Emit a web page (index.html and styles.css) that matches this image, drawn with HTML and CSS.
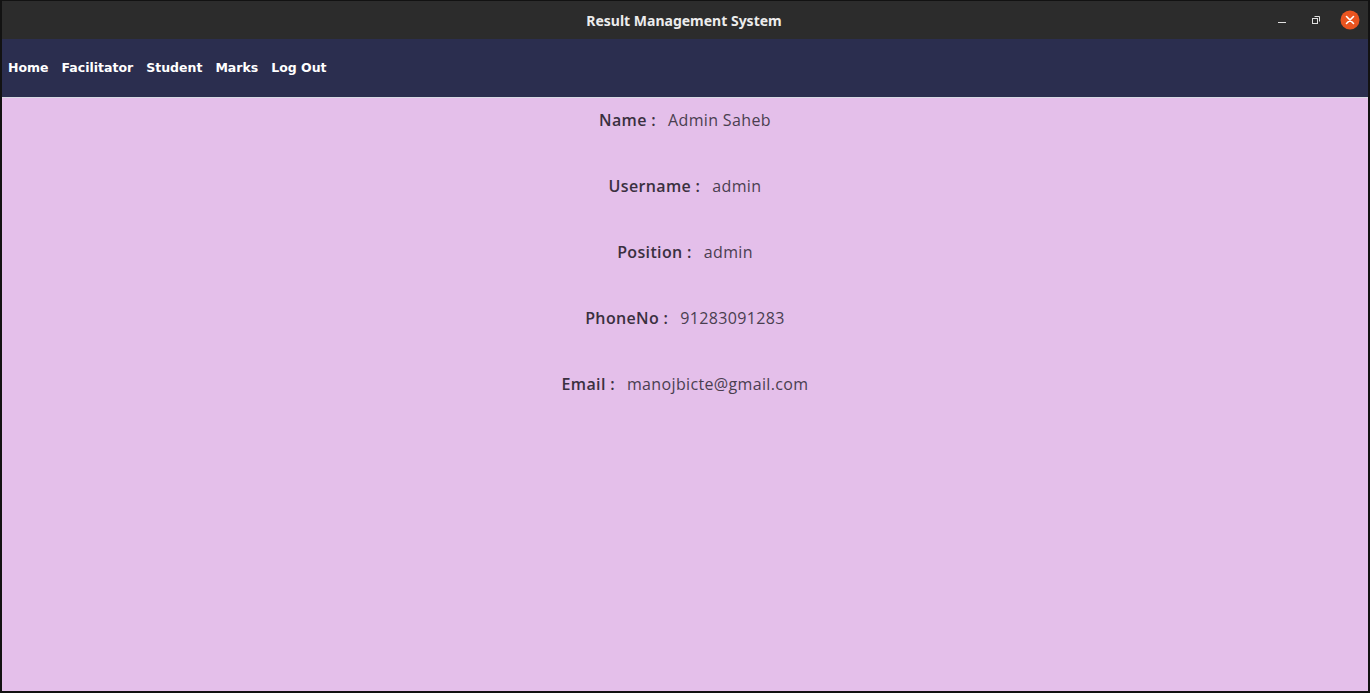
FILE: index.html
```html
<!DOCTYPE html>
<html>
<head>
<meta charset="utf-8">
<title>Result Management System</title>
<link rel="stylesheet" href="styles.css">
</head>
<body>
<div class="window">
  <header class="titlebar">
    <div class="title">Result Management System</div>
    <div class="controls">
      <span class="ctl min"><svg width="10" height="10" viewBox="0 0 10 10"><rect x="1" y="7" width="8" height="1" fill="#e0e0e0"/></svg></span>
      <span class="ctl max"><svg width="10" height="10" viewBox="0 0 10 10"><rect x="1.5" y="3.5" width="5" height="5" fill="none" stroke="#e0e0e0" stroke-width="1"/><path d="M3.5 1.5H8.5V6.5" fill="none" stroke="#e0e0e0" stroke-width="1"/></svg></span>
      <span class="ctl close"><svg width="20" height="20" viewBox="0 0 20 20"><circle cx="10" cy="10" r="9.5" fill="#e95420"/><path d="M6.5 6.5L13.5 13.5M13.5 6.5L6.5 13.5" stroke="#fff" stroke-width="1.6" stroke-linecap="round"/></svg></span>
    </div>
  </header>
  <nav class="menubar">
    <span class="menu-item">Home</span>
    <span class="menu-item">Facilitator</span>
    <span class="menu-item">Student</span>
    <span class="menu-item">Marks</span>
    <span class="menu-item">Log Out</span>
  </nav>
  <main class="content">
    <div class="row"><span class="label">Name :</span><span class="value">Admin Saheb</span></div>
    <div class="row"><span class="label">Username :</span><span class="value">admin</span></div>
    <div class="row"><span class="label">Position :</span><span class="value">admin</span></div>
    <div class="row"><span class="label">PhoneNo :</span><span class="value">91283091283</span></div>
    <div class="row"><span class="label">Email :</span><span class="value">manojbicte@gmail.com</span></div>
  </main>
</div>
</body>
</html>
```

FILE: styles.css
```css
html, body {
  margin: 0;
  padding: 0;
  width: 1370px;
  height: 693px;
  overflow: hidden;
  background: #111;
}

.window {
  box-sizing: border-box;
  width: 1370px;
  height: 693px;
  border: 2px solid #121212;
  border-top-width: 1px;
  display: flex;
  flex-direction: column;
  background: #e4bfea;
}

.titlebar {
  height: 38px;
  flex: none;
  background: #2c2c2c;
  display: flex;
  align-items: center;
  justify-content: center;
  position: relative;
}

.title {
  font-family: "Noto Sans", "DejaVu Sans", sans-serif;
  font-weight: 700;
  font-size: 14px;
  color: #ececec;
  margin-left: -2px;
}

.controls {
  position: absolute;
  right: 8px;
  top: 0;
  height: 38px;
  display: flex;
  align-items: center;
  gap: 14px;
}

.ctl {
  display: flex;
  align-items: center;
  justify-content: center;
  width: 20px;
  height: 20px;
}

.menubar {
  box-sizing: border-box;
  height: 59px;
  flex: none;
  background: #2b2e4f;
  border-bottom: 1px solid #d9d9e4;
  display: flex;
  align-items: center;
  gap: 13px;
  padding-left: 6px;
  padding-bottom: 2px;
}

.menu-item {
  font-family: "DejaVu Sans", sans-serif;
  font-weight: 700;
  font-size: 12.5px;
  color: #ffffff;
}

.content {
  flex: 1;
  display: flex;
  flex-direction: column;
  align-items: center;
  padding-top: 11px;
  gap: 44px;
}

.row {
  display: flex;
  align-items: baseline;
  gap: 12px;
  height: 22px;
  line-height: 22px;
  font-family: "Open Sans", "Noto Sans", sans-serif;
  font-size: 16px;
  letter-spacing: 0.35px;
  color: #3a3040;
}

.label {
  font-weight: 600;
}

.value {
  font-weight: 400;
  color: #4a3e50;
}
```
